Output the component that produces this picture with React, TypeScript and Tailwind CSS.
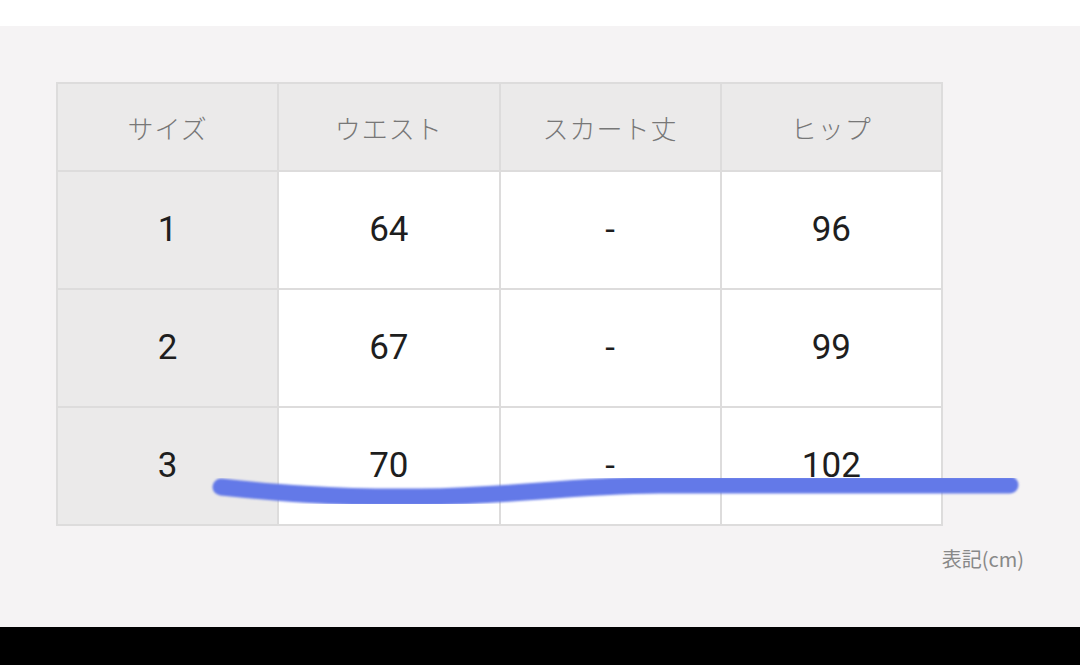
const headers = ["サイズ", "ウエスト", "スカート丈", "ヒップ"];

const rows = [
  ["1", "64", "-", "96"],
  ["2", "67", "-", "99"],
  ["3", "70", "-", "102"],
];

function Marker() {
  return (
    <svg
      className="pointer-events-none absolute left-0 top-0"
      width="1080"
      height="665"
      viewBox="0 0 1080 665"
    >
      <defs>
        <filter id="soft" x="-5%" y="-50%" width="110%" height="200%">
          <feGaussianBlur stdDeviation="0.8" />
        </filter>
      </defs>
      <path
        d="M221 487 C 270 492, 330 498, 420 497 C 520 496, 560 486, 660 485 L 1010 485"
        fill="none"
        stroke="#6479e8"
        strokeWidth="17"
        strokeLinecap="round"
        filter="url(#soft)"
      />
    </svg>
  );
}

export default function App() {
  return (
    <div className="relative flex h-[665px] w-[1080px] flex-col overflow-hidden bg-white font-['Noto_Sans_CJK_JP',sans-serif]">
      <div className="h-[26px] bg-white" />
      <div className="flex flex-1 flex-col bg-[#f5f3f4] pl-[56px] pr-[56px] pt-[56px]">
        <div className="grid w-[887px] grid-cols-4 gap-[2px] border-2 border-[#dddcdc] bg-[#dddcdc]">
          {headers.map((h) => (
            <div
              key={h}
              className="flex h-[86px] items-center justify-center bg-[#ebeaea] text-[26px] font-light tracking-[1px] text-[#777777]"
            >
              {h}
            </div>
          ))}
          {rows.map((r) =>
            r.map((v, i) => (
              <div
                key={r[0] + "-" + i}
                className={
                  "flex h-[116px] items-center justify-center font-['Roboto',sans-serif] text-[35px] text-[#1e1e1e] " +
                  (i === 0 ? "bg-[#ebeaea]" : "bg-white")
                }
              >
                {v}
              </div>
            ))
          )}
        </div>
        <div className="mt-[18px] w-[968px] text-right text-[20px] text-[#888888]">
          表記(cm)
        </div>
      </div>
      <div className="h-[38px] bg-black" />
      <Marker />
    </div>
  );
}
